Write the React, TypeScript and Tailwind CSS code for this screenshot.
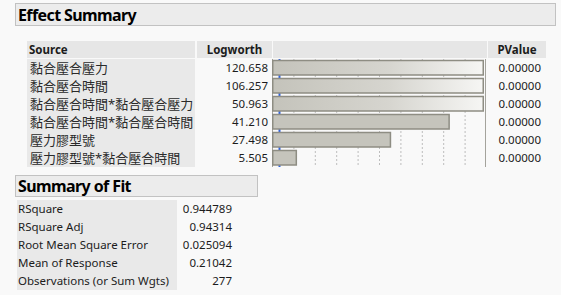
import React from "react";

const FONT = { fontFamily: '"Noto Sans", "Noto Sans CJK TC", sans-serif' };

const rows: [string, string, number][] = [
  ["黏合壓合壓力", "120.658", 120.658],
  ["黏合壓合時間", "106.257", 106.257],
  ["黏合壓合時間*黏合壓合壓力", "50.963", 50.963],
  ["黏合壓合時間*黏合壓合時間", "41.210", 41.21],
  ["壓力膠型號", "27.498", 27.498],
  ["壓力膠型號*黏合壓合時間", "5.505", 5.505],
];

const fit: [string, string][] = [
  ["RSquare", "0.944789"],
  ["RSquare Adj", "0.94314"],
  ["Root Mean Square Error", "0.025094"],
  ["Mean of Response", "0.21042"],
  ["Observations (or Sum Wgts)", "277"],
];

function Chart() {
  const W = 214;
  const H = 108;
  const scale = W / 50;
  const grid = [1, 2, 3, 4, 5, 6, 7, 8, 9].map((k) => k * 5 * scale);
  return (
    <svg width={W} height={H} className="block">
      <defs>
        <linearGradient id="fade" x1="0" x2="1" y1="0" y2="0">
          <stop offset="0" stopColor="#c4c3bb" />
          <stop offset="0.55" stopColor="#d6d5cf" />
          <stop offset="1" stopColor="#f6f6f4" />
        </linearGradient>
      </defs>
      {grid.map((x, i) => (
        <line key={i} x1={x + 0.5} x2={x + 0.5} y1={0} y2={H} stroke="#bdbdbd" strokeDasharray="2 2" />
      ))}
      <line x1={7.5} x2={7.5} y1={0} y2={H} stroke="#2f63e0" strokeWidth={2} />
      <line x1={0.5} x2={0.5} y1={0} y2={H} stroke="#a4a39c" />
      <line x1={W - 0.5} x2={W - 0.5} y1={0} y2={H} stroke="#a4a39c" />
      {rows.map(([, , v], i) => {
        const y = i * 18 + 1.5;
        const clipped = v * scale > W - 3;
        const w = clipped ? W - 3.5 : v * scale;
        return (
          <rect
            key={i}
            x={0.75}
            y={y}
            width={w}
            height={14.5}
            fill={clipped ? "url(#fade)" : "#c5c4bc"}
            stroke="#8e8d83"
            strokeWidth={1.5}
          />
        );
      })}
    </svg>
  );
}

export default function App() {
  return (
    <div className="w-[561px] h-[295px] bg-[#f9f9f9] overflow-hidden text-[#1c1c1c]" style={FONT}>
      <div className="pt-[3px] pl-[15px]">
        <div className="w-[541px] h-[23px] border border-[#c2c2c2] bg-[#ececec] flex items-center pl-[2px] font-bold text-[16px] tracking-[-0.6px] text-black leading-none">
          Effect Summary
        </div>
      </div>

      <div className="ml-[27px] mt-[15px] text-[11.5px] leading-none">
        <div className="flex h-[17px] font-bold">
          <div className="w-[168px] bg-[#e6e6e6] flex items-center pl-[2px]">Source</div>
          <div className="w-[2px]" />
          <div className="w-[75px] bg-[#e6e6e6] flex items-center justify-center">Logworth</div>
          <div className="w-[1px]" />
          <div className="w-[214px] bg-[#e6e6e6]" />
          <div className="w-[1px]" />
          <div className="w-[58px] bg-[#e6e6e6] flex items-center justify-center">PValue</div>
        </div>
        <div className="flex mt-[1px]">
          <div className="w-[168px] bg-[#e9e9e9] flex flex-col">
            {rows.map(([s]) => (
              <div key={s} className="h-[18px] flex items-center pl-[3px] text-[13px] text-[#2a2a2a] whitespace-nowrap">
                {s}
              </div>
            ))}
          </div>
          <div className="w-[2px]" />
          <div className="w-[75px] flex flex-col">
            {rows.map(([s, l]) => (
              <div key={s} className="h-[18px] flex items-center justify-end pr-[4px]">
                {l}
              </div>
            ))}
          </div>
          <Chart />
          <div className="w-[1px]" />
          <div className="w-[58px] flex flex-col">
            {rows.map(([s]) => (
              <div key={s} className="h-[18px] flex items-center justify-end pr-[4px]">
                0.00000
              </div>
            ))}
          </div>
        </div>
      </div>

      <div className="pl-[15px] mt-[8px]">
        <div className="w-[243px] h-[22px] border border-[#c2c2c2] bg-[#ececec] flex items-center pl-[2px] font-bold text-[16px] tracking-[-0.6px] text-black leading-none">
          Summary of Fit
        </div>
        <div className="flex mt-[3px] ml-[2px] text-[11.5px] leading-none">
          <div className="w-[160px] bg-[#e9e9e9] flex flex-col">
            {fit.map(([k]) => (
              <div key={k} className="h-[18px] flex items-center pl-[1px] whitespace-nowrap">
                {k}
              </div>
            ))}
          </div>
          <div className="w-[58px] flex flex-col">
            {fit.map(([k, v]) => (
              <div key={k} className="h-[18px] flex items-center justify-end pr-[3px]">
                {v}
              </div>
            ))}
          </div>
        </div>
      </div>
    </div>
  );
}
